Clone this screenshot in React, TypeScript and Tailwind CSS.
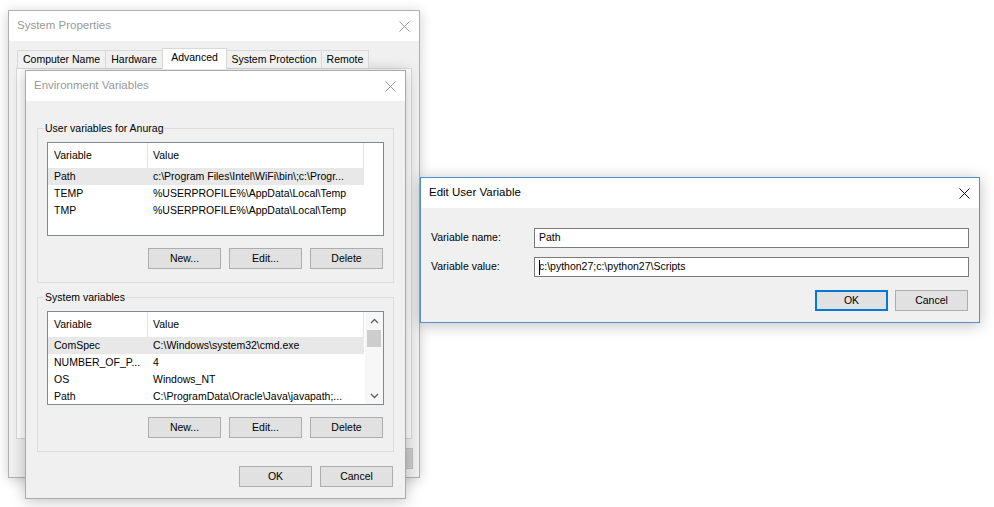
import React from 'react';

type Row = { name: string; value: string };

const userVars: Row[] = [
  { name: 'Path', value: 'c:\\Program Files\\Intel\\WiFi\\bin\\;c:\\Progr...' },
  { name: 'TEMP', value: '%USERPROFILE%\\AppData\\Local\\Temp' },
  { name: 'TMP', value: '%USERPROFILE%\\AppData\\Local\\Temp' },
];

const systemVars: Row[] = [
  { name: 'ComSpec', value: 'C:\\Windows\\system32\\cmd.exe' },
  { name: 'NUMBER_OF_P...', value: '4' },
  { name: 'OS', value: 'Windows_NT' },
  { name: 'Path', value: 'C:\\ProgramData\\Oracle\\Java\\javapath;...' },
];

const tabs = [
  { label: 'Computer Name', w: 'w-[89px]' },
  { label: 'Hardware', w: 'w-[58px]' },
  { label: 'Advanced', w: 'w-[65px]' },
  { label: 'System Protection', w: 'w-[96px]' },
  { label: 'Remote', w: 'w-[48px]' },
];

function CloseIcon({ color }: { color: string }) {
  return (
    <svg width="11" height="11" viewBox="0 0 11 11" className="block">
      <path d="M0.5 0.5L10.5 10.5M10.5 0.5L0.5 10.5" stroke={color} strokeWidth="1" fill="none" />
    </svg>
  );
}

function Chevron({ up }: { up?: boolean }) {
  return (
    <svg width="9" height="6" viewBox="0 0 9 6" className="block">
      <path d={up ? 'M1 5L4.5 1.5L8 5' : 'M1 1L4.5 4.5L8 1'} stroke="#606060" strokeWidth="1.3" fill="none" />
    </svg>
  );
}

function Btn({ label, isDefault = false, disabled = false }: { label: string; isDefault?: boolean; disabled?: boolean }) {
  return (
    <button
      className={`h-[21px] w-[73px] shrink-0 flex items-center justify-center text-[10.5px] ${
        isDefault
          ? 'border-2 border-[#0078d7] bg-[#e1e1e1]'
          : disabled
          ? 'border border-[#bfbfbf] bg-[#cccccc] text-[#838383]'
          : 'border border-[#adadad] bg-[#e1e1e1]'
      }`}
    >
      {label}
    </button>
  );
}

function TitleBar({ title, active = false }: { title: string; active?: boolean }) {
  return (
    <div className="h-[30px] shrink-0 bg-white flex items-center justify-between pl-[8px] pr-[9px]">
      <span className={`text-[11.5px] ${active ? 'text-black' : 'text-[#999999]'}`}>{title}</span>
      <CloseIcon color={active ? '#111111' : '#999999'} />
    </div>
  );
}

function ListView({ rows, scroll = false }: { rows: Row[]; scroll?: boolean }) {
  return (
    <div className="h-[94px] border border-[#828790] bg-white flex overflow-hidden">
      <div className="flex-1 min-w-0 flex flex-col">
        <div className="h-[25px] shrink-0 flex">
          <div className="w-[100px] border-r border-[#e5e5e5] pl-[6px] flex items-center">Variable</div>
          <div className="w-[216px] border-r border-[#e5e5e5] pl-[5px] flex items-center">Value</div>
        </div>
        {rows.map((r, i) => (
          <div key={r.name + i} className={`h-[17px] shrink-0 flex w-[316px] ${i === 0 ? 'bg-[#e8e8e8]' : ''}`}>
            <div className="w-[100px] pl-[6px] flex items-center whitespace-nowrap overflow-hidden">{r.name}</div>
            <div className="w-[216px] pl-[5px] flex items-center whitespace-nowrap overflow-hidden">{r.value}</div>
          </div>
        ))}
      </div>
      {scroll && (
        <div className="w-[18px] shrink-0 flex flex-col bg-[#f7f7f7]">
          <div className="h-[17px] flex items-center justify-center">
            <Chevron up />
          </div>
          <div className="flex-1 pt-[1px] px-[2px]">
            <div className="h-[17px] bg-[#cdcdcd]" />
          </div>
          <div className="h-[17px] flex items-center justify-center">
            <Chevron />
          </div>
        </div>
      )}
    </div>
  );
}

function GroupBox({ label, rows, scroll = false }: { label: string; rows: Row[]; scroll?: boolean }) {
  return (
    <div className="relative h-[155px] border border-[#dcdcdc] flex flex-col">
      <span className="absolute -top-[8px] left-[6px] px-[1px] bg-[#f0f0f0] leading-[14px]">{label}</span>
      <div className="mt-[13px] mx-[9px]">
        <ListView rows={rows} scroll={scroll} />
      </div>
      <div className="mt-[12px] pr-[10px] flex justify-end gap-[8px]">
        <Btn label="New..." />
        <Btn label="Edit..." />
        <Btn label="Delete" />
      </div>
    </div>
  );
}

export default function App() {
  return (
    <div className="relative w-[994px] h-[507px] overflow-hidden bg-white text-black text-[10.5px] font-['Liberation_Sans',Arial,sans-serif]">
      {/* System Properties (behind) */}
      <div className="absolute left-[8px] top-[10px] w-[412px] h-[468px] border border-[#b0b0b0] bg-[#f0f0f0] flex flex-col shadow-[0_2px_12px_rgba(0,0,0,0.2)]">
        <TitleBar title="System Properties" />
        <div className="flex-1 flex flex-col px-[7px] pt-[7px]">
          <div className="h-[20px] flex items-end pl-[1px] relative z-10">
            {tabs.map((t) => (
              <div
                key={t.label}
                className={`${t.w} shrink-0 flex items-center justify-center border-t border-x border-[#d9d9d9] -ml-px first:ml-0 whitespace-nowrap ${
                  t.label === 'Advanced' ? 'h-[21px] -mb-px bg-white pb-[3px]' : 'h-[18px] bg-[#f0f0f0]'
                }`}
              >
                {t.label}
              </div>
            ))}
          </div>
          <div className="h-[371px] border border-[#d9d9d9] bg-white" />
          <div className="mt-[9px] flex justify-end gap-[6px] -mr-[1px]">
            <Btn label="OK" />
            <Btn label="Cancel" />
            <Btn label="Apply" disabled />
          </div>
        </div>
      </div>

      {/* Environment Variables */}
      <div className="absolute left-[25px] top-[70px] w-[381px] h-[429px] border border-[#aaaaaa] bg-[#f0f0f0] flex flex-col shadow-[0_2px_14px_rgba(0,0,0,0.25)]">
        <TitleBar title="Environment Variables" />
        <div className="flex-1 flex flex-col px-[11px] pt-[27px]">
          <GroupBox label="User variables for Anurag" rows={userVars} />
          <div className="mt-[14px]">
            <GroupBox label="System variables" rows={systemVars} scroll />
          </div>
          <div className="mt-[14px] pr-[1px] flex justify-end gap-[8px]">
            <Btn label="OK" />
            <Btn label="Cancel" />
          </div>
        </div>
      </div>

      {/* Edit User Variable (active) */}
      <div className="absolute left-[420px] top-[177px] w-[560px] h-[146px] border border-[#4f8fcc] bg-[#f0f0f0] flex flex-col shadow-[0_2px_14px_rgba(0,0,0,0.25)]">
        <TitleBar title="Edit User Variable" active />
        <div className="flex-1 flex flex-col px-[10px] pt-[20px]">
          <div className="flex items-center">
            <span className="w-[103px] shrink-0">Variable name:</span>
            <div className="flex-1 h-[20px] border border-[#7a7a7a] bg-white flex items-center pl-[4px]">Path</div>
          </div>
          <div className="flex items-center mt-[9px]">
            <span className="w-[103px] shrink-0">Variable value:</span>
            <div className="flex-1 h-[20px] border border-[#7a7a7a] bg-white flex items-center pl-[4px]">
              <span className="relative">
                <span className="absolute left-0 top-[1px] bottom-[0px] w-px bg-black" />
                c:\python27;c:\python27\Scripts
              </span>
            </div>
          </div>
          <div className="mt-[13px] pr-[1px] flex justify-end gap-[7px]">
            <Btn label="OK" isDefault />
            <Btn label="Cancel" />
          </div>
        </div>
      </div>
    </div>
  );
}
